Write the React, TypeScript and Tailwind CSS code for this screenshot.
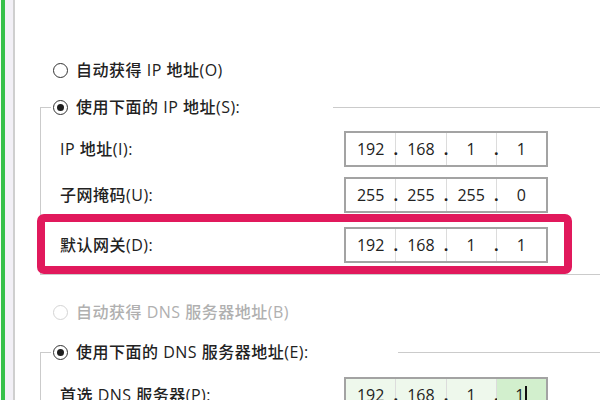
import React from "react";

const FONT = { fontFamily: '"Open Sans", "Noto Sans CJK SC", sans-serif' };

function Radio({ checked, disabled }: { checked?: boolean; disabled?: boolean }) {
  return (
    <span
      className={`flex h-[15px] w-[15px] shrink-0 items-center justify-center rounded-full border bg-white ${
        disabled ? "border-[#d4d4d4]" : "border-[#333]"
      }`}
    >
      {checked && <span className="h-[7px] w-[7px] rounded-full bg-[#1e1e1e]" />}
    </span>
  );
}

function IpBox({ values, green }: { values: string[]; green?: boolean }) {
  return (
    <div
      className={`flex h-[36px] w-[204px] shrink-0 border-2 border-[#a3a3a3] text-[16px] font-medium text-[#222] ${
        green ? "bg-[#eef8ec]" : "bg-white"
      }`}
    >
      {values.map((v, i) => (
        <div
          key={i}
          className={`relative flex flex-1 items-center justify-center ${
            i < 3 ? "border-r border-[#dcdcdc]" : ""
          } ${green && i === 3 ? "bg-[#d2efcd]" : ""}`}
        >
          <span className="leading-[20px]">{v}</span>
          {green && i === 3 && <span className="ml-[1px] h-[18px] w-[2px] bg-[#111]" />}
          {i < 3 && (
            <span className="absolute inset-y-0 -right-[4px] flex w-[7px] items-center justify-center font-bold leading-[20px]">
              .
            </span>
          )}
        </div>
      ))}
    </div>
  );
}

function Row({ label, values, green }: { label: string; values: string[]; green?: boolean }) {
  return (
    <div className="flex h-[36px] items-center">
      <span className="w-[284px] shrink-0 text-[16px] font-medium leading-[20px] tracking-[0.5px] text-[#222]">
        {label}
      </span>
      <IpBox values={values} green={green} />
    </div>
  );
}

function GroupHeader({ label, lineWidth }: { label: string; lineWidth: string }) {
  return (
    <div className="flex h-[20px] items-center">
      <span className="h-[10px] w-[11px] self-end border-l border-t border-[#cbcbcb]" />
      <span className="ml-[2px]">
        <Radio checked />
      </span>
      <span className="ml-[8px] whitespace-nowrap text-[16px] font-medium leading-[20px] tracking-[0.5px] text-[#222]">
        {label}
      </span>
      <span className="flex-1" />
      <span className={`h-px bg-[#cbcbcb] ${lineWidth}`} />
    </div>
  );
}

export default function App() {
  return (
    <div className="flex h-[400px] w-[600px] overflow-hidden bg-white" style={FONT}>
      <div className="flex h-full w-[15px] shrink-0">
        <span className="w-[1px] bg-[#f4fbf4]" />
        <span className="w-[4px] bg-[#36c04a]" />
        <span className="w-[8px] bg-[#f2f0f6]" />
        <span className="w-[2px] bg-[#cfcfcf]" />
      </div>
      <div className="flex flex-1 flex-col">
        <div className="mt-[60px] flex h-[20px] items-center pl-[38px]">
          <Radio />
          <span className="ml-[8px] text-[16px] font-medium leading-[20px] tracking-[0.5px] text-[#222]">
            自动获得 IP 地址(O)
          </span>
        </div>

        <div className="ml-[25px] mt-[17px] flex flex-col">
          <GroupHeader label="使用下面的 IP 地址(S):" lineWidth="w-[267px]" />
          <div className="flex flex-col border-b border-l border-[#cbcbcb] pl-[19px] pt-[14px]">
            <Row label="IP 地址(I):" values={["192", "168", "1", "1"]} />
            <div className="mt-[10px]">
              <Row label="子网掩码(U):" values={["255", "255", "255", "0"]} />
            </div>
            <div className="-ml-[23px] mt-[1px] w-[535px] rounded-[7px] border-[8px] border-[#e1195c] pb-[3px] pl-[15px] pt-[5px]">
              <Row label="默认网关(D):" values={["192", "168", "1", "1"]} />
            </div>
          </div>
        </div>

        <div className="mt-[27px] flex h-[20px] items-center pl-[38px]">
          <Radio disabled />
          <span className="ml-[8px] text-[16px] font-medium leading-[20px] tracking-[0.5px] text-[#b0b0b0]">
            自动获得 DNS 服务器地址(B)
          </span>
        </div>

        <div className="ml-[25px] mt-[20px] flex flex-col">
          <GroupHeader label="使用下面的 DNS 服务器地址(E):" lineWidth="w-[202px]" />
          <div className="flex flex-col border-l border-[#cbcbcb] pl-[19px] pt-[15px]">
            <Row label="首选 DNS 服务器(P):" values={["192", "168", "1", "1"]} green />
          </div>
        </div>
      </div>
    </div>
  );
}
